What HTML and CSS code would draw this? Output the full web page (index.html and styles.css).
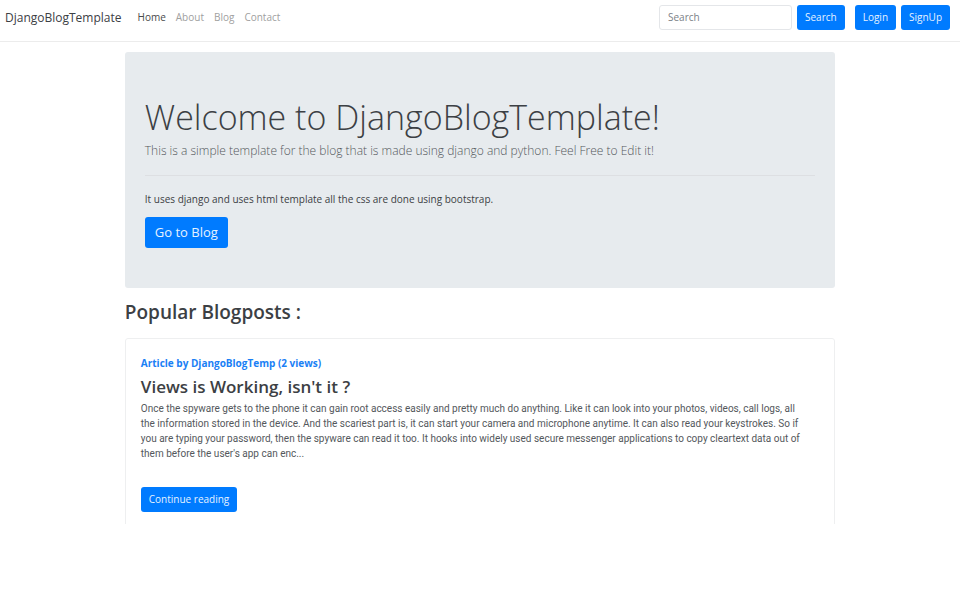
FILE: index.html
```html
<!DOCTYPE html>
<html lang="en">
<head>
<meta charset="utf-8">
<title>DjangoBlogTemplate</title>
<link rel="stylesheet" href="styles.css">
</head>
<body>
<header class="navbar">
  <a class="brand" href="#">DjangoBlogTemplate</a>
  <nav class="links">
    <a class="active" href="#">Home</a>
    <a href="#">About</a>
    <a href="#">Blog</a>
    <a href="#">Contact</a>
  </nav>
  <form class="search">
    <input type="search" placeholder="Search" aria-label="Search">
    <button class="btn" type="submit">Search</button>
  </form>
  <div class="account">
    <button class="btn" type="button">Login</button>
    <button class="btn" type="button">SignUp</button>
  </div>
</header>
<main class="container">
  <section class="jumbotron">
    <h1>Welcome to DjangoBlogTemplate!</h1>
    <p class="lead">This is a simple template for the blog that is made using django and python. Feel Free to Edit it!</p>
    <hr>
    <p class="note">It uses django and uses html template all the css are done using bootstrap.</p>
    <a class="btn btn-large" href="#">Go to Blog</a>
  </section>
  <h2>Popular Blogposts :</h2>
  <div class="posts">
    <article class="card">
      <strong class="byline">Article by DjangoBlogTemp (2 views)</strong>
      <h3>Views is Working, isn't it ?</h3>
      <p class="excerpt">Once the spyware gets to the phone it can gain root access easily and pretty much do anything. Like it can look into your photos, videos, call logs, all<br>
      the information stored in the device. And the scariest part is, it can start your camera and microphone anytime. It can also read your keystrokes. So if<br>
      you are typing your password, then the spyware can read it too. It hooks into widely used secure messenger applications to copy cleartext data out of<br>
      them before the user's app can enc...</p>
      <a class="btn" href="#">Continue reading</a>
    </article>
  </div>
</main>
</body>
</html>
```
FILE: styles.css
```css
* { box-sizing: border-box; }

body {
  margin: 0;
  background: #fff;
  color: #3c4044;
  font-family: "Open Sans", "Noto Sans", sans-serif;
  font-size: 10px;
  line-height: 15px;
}

a { text-decoration: none; }
h1, h2, h3, p { margin: 0; }

.navbar {
  display: flex;
  align-items: center;
  padding: 5px 10px 11px 5px;
  border-bottom: 1px solid #ececec;
}

.brand {
  color: #3c4044;
  font-size: 12px;
}

.links {
  display: flex;
  gap: 10px;
  margin-left: 16px;
}

.links a { color: #a0a0a0; }
.links .active { color: #4a4a4a; }

.search {
  display: flex;
  gap: 5px;
  margin-left: auto;
}

.search input {
  width: 133px;
  padding: 0 8px;
  border: 1px solid #e4e6e9;
  border-radius: 3px;
  background: #fff;
  font: inherit;
}

.search input::placeholder { color: #7b8187; }

.account {
  display: flex;
  gap: 5px;
  margin-left: 10px;
}

.btn {
  display: inline-block;
  padding: 5px 8px;
  border: 0;
  border-radius: 3px;
  background: #007bff;
  color: #e6f2ff;
  font: inherit;
}

.container {
  width: 74%;
  margin: 10px auto 0;
}

.jumbotron {
  padding: 41px 20px 40px;
  border-radius: 3px;
  background: #e7ebee;
}

.jumbotron h1 {
  font-size: 34px;
  font-weight: 300;
  line-height: 48px;
}

.lead {
  color: #54585c;
  font-size: 12px;
  font-weight: 300;
  line-height: 20px;
}

hr {
  margin: 14px 0 16px;
  border: 0;
  border-top: 1px solid #dddfe2;
}

.note { margin-bottom: 10px; }

.jumbotron .btn-large {
  padding: 5px 10px;
  font-size: 13px;
  line-height: 21px;
}

h2 {
  margin: 11px 0 13px;
  font-size: 19px;
  font-weight: 600;
  line-height: 26px;
}

/* Only the top of the list is shown; the first card runs past its edge. */
.posts {
  max-height: 186px;
  overflow: hidden;
}

.card {
  padding: 17px 15px 24px;
  border: 1px solid #eeeff0;
  border-radius: 3px;
}

.byline { color: #1a80f5; }

h3 {
  margin-top: 3px;
  font-size: 17px;
  font-weight: 600;
  line-height: 26px;
}

.excerpt {
  margin: 1px 0 26px;
  color: #54585c;
  font-family: Roboto, "Open Sans", sans-serif;
}
```
